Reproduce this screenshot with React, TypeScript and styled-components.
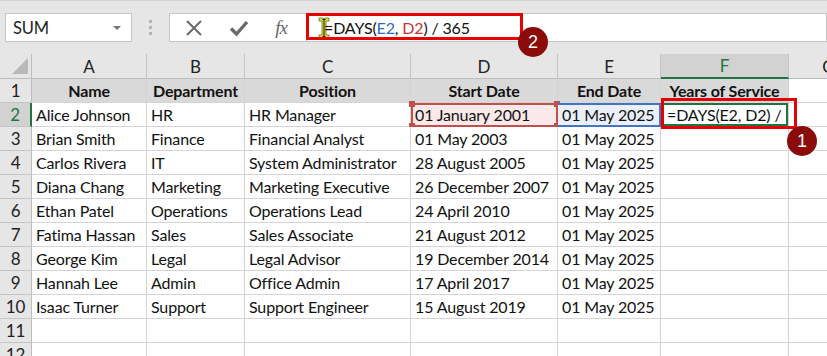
import React from 'react'
import styled, { createGlobalStyle, css } from 'styled-components'

const GlobalStyle = createGlobalStyle`
  html, body {
    margin: 0;
    padding: 0;
    background: #ffffff;
    overflow: hidden;
  }
  * { box-sizing: border-box; }
`

const GREEN = '#217346'
const RED = '#e60000'
const BADGE = '#8b0a0a'
const LINE = '#d4d4d4'

const Page = styled.div`
  width: 827px;
  height: 356px;
  overflow: hidden;
  background: #e6e6e6;
  font-family: Lato, "Liberation Sans", sans-serif;
  font-size: 16px;
  letter-spacing: -0.15px;
  color: #111;
  border-top: 1px solid #d2d2d2;
`

const TopBar = styled.div`
  display: flex;
  align-items: stretch;
  height: 29px;
  margin: 12px 0 0 5px;
`

const NameBox = styled.div`
  width: 127px;
  background: #fff;
  border: 1px solid #c6c6c6;
  display: flex;
  align-items: center;
  justify-content: space-between;
  padding: 0 10px 0 7px;
  font-size: 16.5px;
  color: #222;
`

const Caret = styled.span`
  width: 0;
  height: 0;
  border-left: 4px solid transparent;
  border-right: 4px solid transparent;
  border-top: 4px solid #777;
`

const Grip = styled.div`
  width: 37px;
  display: flex;
  flex-direction: column;
  align-items: center;
  justify-content: center;
  gap: 3px;

  span {
    width: 3px;
    height: 3px;
    background: #b3b3b3;
  }
`

const FxButtons = styled.div`
  width: 137px;
  background: #fff;
  border: 1px solid #c6c6c6;
  border-right: none;
  display: flex;
  align-items: center;
  justify-content: space-around;
  padding: 0 6px 0 2px;
`

const FxLabel = styled.span`
  font-family: "Liberation Serif", "DejaVu Serif", serif;
  font-style: italic;
  font-size: 19px;
  color: #666;
  letter-spacing: -1px;
`

const FormulaInput = styled.div`
  position: relative;
  flex: 1;
  background: #fff;
  border: 1px solid #c6c6c6;
  display: flex;
  align-items: center;
  padding-left: 11px;
`

const Cursor = styled.svg`
  flex: none;
`

const FormulaText = styled.span`
  margin-left: -6px;
`

const Ref = styled.span<{ $tone: 'blue' | 'red' }>`
  color: ${p => (p.$tone === 'blue' ? '#2e6ac2' : '#c8333a')};
`

const MarkBox = styled.div`
  position: absolute;
  left: -1px;
  top: -1px;
  width: 217px;
  height: 27px;
  border: 3px solid ${RED};
  pointer-events: none;
`

const Badge = styled.div<{ $left: number; $top: number }>`
  position: absolute;
  left: ${p => p.$left}px;
  top: ${p => p.$top}px;
  width: 30px;
  height: 30px;
  border-radius: 50%;
  background: ${BADGE};
  color: #fff;
  display: flex;
  align-items: center;
  justify-content: center;
  font-family: "Liberation Sans", Arial, sans-serif;
  font-size: 18px;
  font-weight: 400;
  letter-spacing: 0;
  z-index: 5;
`

const Sheet = styled.div`
  display: grid;
  grid-template-columns: 32px 115px 98px 166px 147px 103px 128px 80px;
  grid-template-rows: 25px repeat(12, 24px);
  margin-top: 12px;
`

const Corner = styled.div`
  position: relative;
  border-right: 1px solid #bdbdbd;
  border-bottom: 1px solid #bdbdbd;

  &::after {
    content: '';
    position: absolute;
    right: 3px;
    bottom: 4px;
    width: 0;
    height: 0;
    border-left: 16px solid transparent;
    border-bottom: 16px solid #b9b9b9;
  }
`

const ColHead = styled.div<{ $active?: boolean }>`
  display: flex;
  align-items: center;
  justify-content: center;
  border-right: 1px solid #c4c4c4;
  border-bottom: 1px solid #bdbdbd;
  font-size: 17px;
  color: #222;
  ${p =>
    p.$active &&
    css`
      background: #d2d2d2;
      color: ${GREEN};
      border-bottom: 2px solid ${GREEN};
    `}
`

const RowHead = styled.div<{ $active?: boolean }>`
  display: flex;
  align-items: center;
  justify-content: center;
  border-right: 1px solid #bdbdbd;
  border-bottom: 1px solid #c4c4c4;
  font-size: 17px;
  color: #222;
  ${p =>
    p.$active &&
    css`
      background: #d2d2d2;
      color: ${GREEN};
      border-right: 2px solid ${GREEN};
    `}
`

type Tone = 'plain' | 'head' | 'start' | 'end' | 'edit'

const Cell = styled.div<{ $tone?: Tone }>`
  position: relative;
  background: #fff;
  border-right: 1px solid ${LINE};
  border-bottom: 1px solid ${LINE};
  padding: 0 4px;
  line-height: 23px;
  white-space: nowrap;
  ${p =>
    p.$tone === 'head' &&
    css`
      background: #d9d9d9;
      font-weight: 700;
      text-align: center;
    `}
  ${p =>
    p.$tone === 'start' &&
    css`
      background: #fbe9e9;
      border: 2px solid #c0504d;
      padding-left: 2px;
      line-height: 20px;
    `}
  ${p =>
    p.$tone === 'end' &&
    css`
      background: #eaf0fa;
      border: 2px solid #4472c4;
      border-left: none;
      padding-left: 4px;
      line-height: 20px;
    `}
  ${p =>
    p.$tone === 'edit' &&
    css`
      box-shadow: inset 0 0 0 2px ${GREEN};
      padding-left: 6px;
    `}
`

const Handle = styled.i<{ $x: 'l' | 'r'; $y: 't' | 'b' }>`
  position: absolute;
  width: 6px;
  height: 6px;
  background: #c0504d;
  ${p => (p.$x === 'l' ? 'left: -4px;' : 'right: -4px;')}
  ${p => (p.$y === 't' ? 'top: -4px;' : 'bottom: -4px;')}
`

const CellMark = styled.div`
  position: absolute;
  left: 0;
  top: -5px;
  right: -9px;
  bottom: -3px;
  border: 3px solid ${RED};
  pointer-events: none;
  z-index: 4;
`

const columns = ['A', 'B', 'C', 'D', 'E', 'F', 'G']

const rows = [
  ['Alice Johnson', 'HR', 'HR Manager', '01 January 2001', '01 May 2025'],
  ['Brian Smith', 'Finance', 'Financial Analyst', '01 May 2003', '01 May 2025'],
  ['Carlos Rivera', 'IT', 'System Administrator', '28 August 2005', '01 May 2025'],
  ['Diana Chang', 'Marketing', 'Marketing Executive', '26 December 2007', '01 May 2025'],
  ['Ethan Patel', 'Operations', 'Operations Lead', '24 April 2010', '01 May 2025'],
  ['Fatima Hassan', 'Sales', 'Sales Associate', '21 August 2012', '01 May 2025'],
  ['George Kim', 'Legal', 'Legal Advisor', '19 December 2014', '01 May 2025'],
  ['Hannah Lee', 'Admin', 'Office Admin', '17 April 2017', '01 May 2025'],
  ['Isaac Turner', 'Support', 'Support Engineer', '15 August 2019', '01 May 2025'],
]

const headers = ['Name', 'Department', 'Position', 'Start Date', 'End Date', 'Years of Service']

const IBeam = () => (
  <Cursor width="12" height="22" viewBox="0 0 12 22">
    <path
      d="M1 1h4l1 1 1-1h4v3H8v14h3v3H7l-1-1-1 1H1v-3h3V4H1z"
      fill="#e8e84a"
      stroke="#6b6b00"
      strokeWidth="0.8"
    />
    <path d="M2.5 2h3v1h-1v16h1v1h-3v-1h1V3h-1z" fill="#111" transform="translate(2 0)" />
  </Cursor>
)

const App = () => {
  return (
    <Page>
      <GlobalStyle />
      <TopBar>
        <NameBox>
          SUM
          <Caret />
        </NameBox>
        <Grip>
          <span />
          <span />
          <span />
        </Grip>
        <FxButtons>
          <svg width="18" height="18" viewBox="0 0 18 18">
            <path d="M2 2L16 16M16 2L2 16" stroke="#6a6a6a" strokeWidth="2" fill="none" />
          </svg>
          <svg width="20" height="18" viewBox="0 0 20 18">
            <path d="M2 9.5L7.5 15L18 3" stroke="#6a6a6a" strokeWidth="3.4" fill="none" />
          </svg>
          <FxLabel>fx</FxLabel>
        </FxButtons>
        <FormulaInput>
          <IBeam />
          <FormulaText>
            =DAYS(<Ref $tone="blue">E2</Ref>, <Ref $tone="red">D2</Ref>) / 365
          </FormulaText>
          <MarkBox />
          <Badge $left={211} $top={13}>2</Badge>
        </FormulaInput>
      </TopBar>

      <Sheet>
        <Corner />
        {columns.map(c => (
          <ColHead key={c} $active={c === 'F'}>
            {c}
          </ColHead>
        ))}

        <RowHead>1</RowHead>
        {headers.map(h => (
          <Cell key={h} $tone="head">
            {h}
          </Cell>
        ))}
        <Cell />

        {rows.map((r, i) => (
          <React.Fragment key={r[0]}>
            <RowHead $active={i === 0}>{i + 2}</RowHead>
            <Cell>{r[0]}</Cell>
            <Cell>{r[1]}</Cell>
            <Cell>{r[2]}</Cell>
            {i === 0 ? (
              <Cell $tone="start">
                {r[3]}
                <Handle $x="l" $y="t" />
                <Handle $x="r" $y="t" />
                <Handle $x="l" $y="b" />
                <Handle $x="r" $y="b" />
              </Cell>
            ) : (
              <Cell>{r[3]}</Cell>
            )}
            <Cell $tone={i === 0 ? 'end' : 'plain'}>{r[4]}</Cell>
            {i === 0 ? (
              <Cell $tone="edit">
                =DAYS(E2, D2) /
                <CellMark />
                <Badge $left={126} $top={23}>1</Badge>
              </Cell>
            ) : (
              <Cell />
            )}
            <Cell />
          </React.Fragment>
        ))}

        {[11, 12].map(n => (
          <React.Fragment key={n}>
            <RowHead>{n}</RowHead>
            {columns.map(c => (
              <Cell key={c} />
            ))}
          </React.Fragment>
        ))}
      </Sheet>
    </Page>
  )
}

export default App
